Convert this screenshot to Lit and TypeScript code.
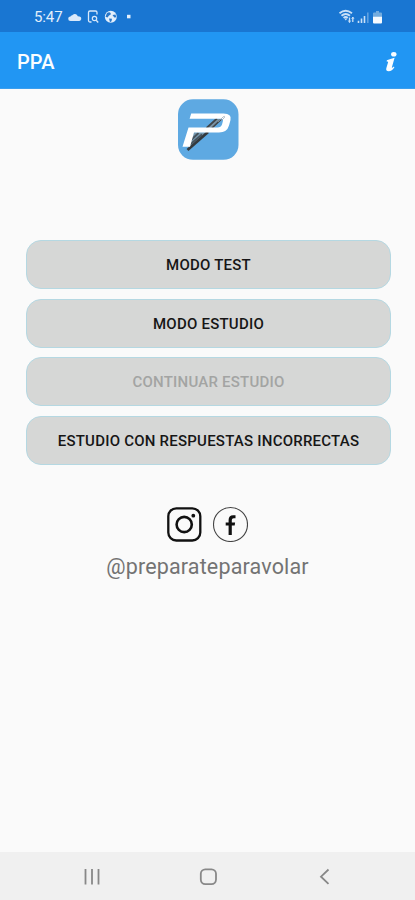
import { LitElement, html, css, svg } from "lit";
import { customElement } from "lit/decorators.js";
import { classMap } from "lit/directives/class-map.js";

const modes = [
  { label: "MODO TEST", disabled: false },
  { label: "MODO ESTUDIO", disabled: false },
  { label: "CONTINUAR ESTUDIO", disabled: true },
  { label: "ESTUDIO CON RESPUESTAS INCORRECTAS", disabled: false },
];

@customElement("status-bar")
class StatusBar extends LitElement {
  static styles = css`
    :host {
      display: flex;
      box-sizing: border-box;
      height: 32px;
      padding: 1px 31px 0 34px;
      align-items: center;
      background: #1976d2;
      color: #e3effb;
    }
    .time {
      width: 34px;
      font-size: 15px;
      letter-spacing: -0.1px;
    }
    .right {
      margin-left: auto;
    }
    svg {
      display: block;
    }
  `;
  render() {
    return html`
      <span class="time">5:47</span>
      <svg width="66" height="16" viewBox="68 8.500 66 16" fill="none" stroke="#d9e9fa">
        <path d="M70.500 20.500a2.300 2.300 0 0 1 0-4.600q.5-1.300 1.500-.9a3.200 3.200 0 0 1 5.800.8q4 .1 3.400 3-.5 1.700-2 1.700z" fill="#d9e9fa" stroke="none" />
        <path d="M91.500 21.500h-1.500q-1.500 0-1.500-1.500v-8q0-1.500 1.500-1.500h5.500q1.500 0 1.500 1.500v2" stroke-width="1.300" />
        <circle cx="94.500" cy="18" r="2.200" stroke-width="1.200" />
        <path d="M96.200 19.800l2 2.200" stroke-width="1.300" />
        <circle cx="110.800" cy="16.300" r="6" fill="#e3effb" stroke="none" />
        <path d="M107 12.500q2.500-1.500 3.500 0t-1.500 2.500l-1.500 2-2-.7zM112.500 14.500l3-.5.800 2.700-2 .3zM109 18l3 .3-.5 2.500-1.500 1z" fill="#2877c9" stroke="none" />
        <rect x="127" y="14.300" width="3.500" height="3.500" fill="#e3effb" stroke="none" />
      </svg>
      <svg class="right" width="46" height="18" viewBox="338 7.500 46 18" fill="none" stroke="#c9e0f7">
        <path d="M339.500 12.800q6-5 12.500 0M341.500 15.200q4.200-3.500 8.500 0M343.500 17.400q2.200-1.800 4.300 0" stroke-width="1.800" />
        <path d="M344.200 18l1.600 2 1.600-2z" fill="#c9e0f7" stroke="none" />
        <path d="M349.500 17v5M352.800 16.500v5" stroke-width="1.300" />
        <path d="M348.300 20l1.200 2 1.200-2M351.600 18.500l1.200-2 1.200 2" stroke-width=".8" />
        <path d="M358.500 20.300v2.200M361.500 18v4.500M364.500 15.500v7" stroke-width="1.600" />
        <path d="M367.800 12v10.500" stroke-width="1.600" opacity=".4" />
        <path d="M374 12h2v-1.500h3V12h2q1 0 1 1v4h-9v-4q0-1 1-1z" fill="#73acdf" stroke="none" />
        <path d="M373 16.300h9V22q0 1-1 1h-7q-1 0-1-1z" fill="#f5faff" stroke="none" />
      </svg>
    `;
  }
}

@customElement("title-bar")
class TitleBar extends LitElement {
  static styles = css`
    :host {
      display: flex;
      box-sizing: border-box;
      height: 57px;
      padding: 3px 17px 0;
      align-items: center;
      justify-content: space-between;
      background: #2196f3;
      border-bottom: 1px solid #3a9eee;
      color: #fafdff;
    }
    .title {
      font-size: 20px;
      font-weight: 500;
      letter-spacing: 0.1px;
    }
  `;
  render() {
    return html`
      <span class="title">PPA</span>
      <svg width="14" height="22" viewBox="384 50 14 22" fill="#fafdff">
        <ellipse cx="393.800" cy="53.200" rx="2.700" ry="2.300" />
        <path d="M386.800 59.300q3.500-1.500 7.800-2.500l-2.700 9.400q-.3 1.200 2-.8l.5.900q-2.300 3.900-5.800 3.900-3 0-2.300-3l1.800-6q.2-.8-1.300-.5z" />
      </svg>
    `;
  }
}

@customElement("mode-list")
class ModeList extends LitElement {
  static styles = css`
    :host {
      display: flex;
      flex-direction: column;
      gap: 9.700px;
      margin: 80px 24px 0 26px;
    }
    .mode {
      box-sizing: border-box;
      height: 49px;
      padding: 2px 0 0;
      border: 1px solid #b5d8e2;
      border-radius: 15px;
      background: #d6d7d6;
      color: #161616;
      font: 470 15px/1 Roboto, sans-serif;
      letter-spacing: 0.23px;
    }
    .disabled {
      color: #a3a4a3;
    }
  `;
  render() {
    return modes.map(
      (m) => html`<button class=${classMap({ mode: true, disabled: m.disabled })} ?disabled=${m.disabled}>${m.label}</button>`
    );
  }
}

const navIcons = [
  svg`<path d="M85.500 869v15.500M92 869v15.500M98.500 869v15.500" />`,
  svg`<rect x="200.800" y="869.300" width="15.200" height="14.800" rx="4.500" />`,
  svg`<path d="M328.500 869.500l-7.500 7.200 7.500 7.200" />`,
];

@customElement("app-root")
class AppRoot extends LitElement {
  static styles = css`
    :host {
      display: flex;
      flex-direction: column;
      height: 900px;
      overflow: hidden;
      background: #fafafa;
      font-family: Roboto, sans-serif;
    }
    .content {
      flex: 1;
      display: flex;
      flex-direction: column;
    }
    svg {
      display: block;
    }
    .logo {
      margin: 10px auto 0 178px;
    }
    .social {
      display: flex;
      gap: 10px;
      margin: 41px 0 0 166px;
    }
    .handle {
      margin: 12px 0 0;
      text-align: center;
      font-size: 21.500px;
      line-height: 26px;
      font-weight: 400;
      letter-spacing: 0.16px;
      color: #737373;
    }
    .nav {
      height: 48px;
      background: #f0f0f0;
    }
  `;
  render() {
    return html`
      <status-bar></status-bar>
      <title-bar></title-bar>
      <main class="content">
        <svg class="logo" width="61" height="61" viewBox="178 99 61 61">
          <rect x="178" y="99.300" width="60.500" height="60.500" rx="15" fill="#5ea9e2" />
          <path d="M188 148l18-15.500h-15l-3 8z" fill="#7598b0" />
          <path d="M187.500 150L208 132" stroke="#34393d" stroke-width="2.800" />
          <path d="M189.500 141.500l9-8.500M190 144.500l12-10" stroke="#46525b" stroke-width="1.800" />
          <path d="M206 128l10-9h6l-9 9z" fill="#7a93a5" />
          <path d="M206.500 128l10.500-9.500M212 128l9-8.500" stroke="#3f464b" stroke-width="1.700" />
          <path d="M191.200 113.500H223.500q8.500 0 7 6.500l-1.500 5.500q-2 7-10 7H194l-4 14.200h-7.500l6-19.200H217.500q3.500 0 4.500-3l.8-3q.8-2.800-2-2.800h-31.200z" fill="#fff" />
          <path d="M218 122l5-5q2-1.500 1.500.5l-3.500 3.500" fill="none" stroke="#90a2b0" stroke-width=".7" />
        </svg>
        <mode-list></mode-list>
        <div class="social">
          <svg width="36" height="36" viewBox="166 506 36 36" fill="none" stroke="#111">
            <rect x="168.300" y="508.300" width="32" height="32.200" rx="8" stroke-width="2.300" />
            <circle cx="184.200" cy="524.500" r="7.600" stroke-width="2.600" />
            <circle cx="193.300" cy="515.700" r="1.900" fill="#111" stroke="none" />
          </svg>
          <svg width="36" height="36" viewBox="212 506 36 36" fill="none">
            <circle cx="230.500" cy="524.500" r="17" stroke="#444" stroke-width="1.100" />
            <path d="M228.600 535v-9.500h-2.900v-2.900h2.900v-2.600q0-4.800 4.500-4.800h2.400v3h-1.800q-1.900 0-1.900 1.900v2.500h3.300l-.4 2.900h-2.900v9.500z" fill="#111" />
          </svg>
        </div>
        <p class="handle">@preparateparavolar</p>
      </main>
      <nav class="nav">
        <svg width="415" height="48" viewBox="0 852 415 48" fill="none" stroke="#888" stroke-width="1.800">
          ${navIcons}
        </svg>
      </nav>
    `;
  }
}
